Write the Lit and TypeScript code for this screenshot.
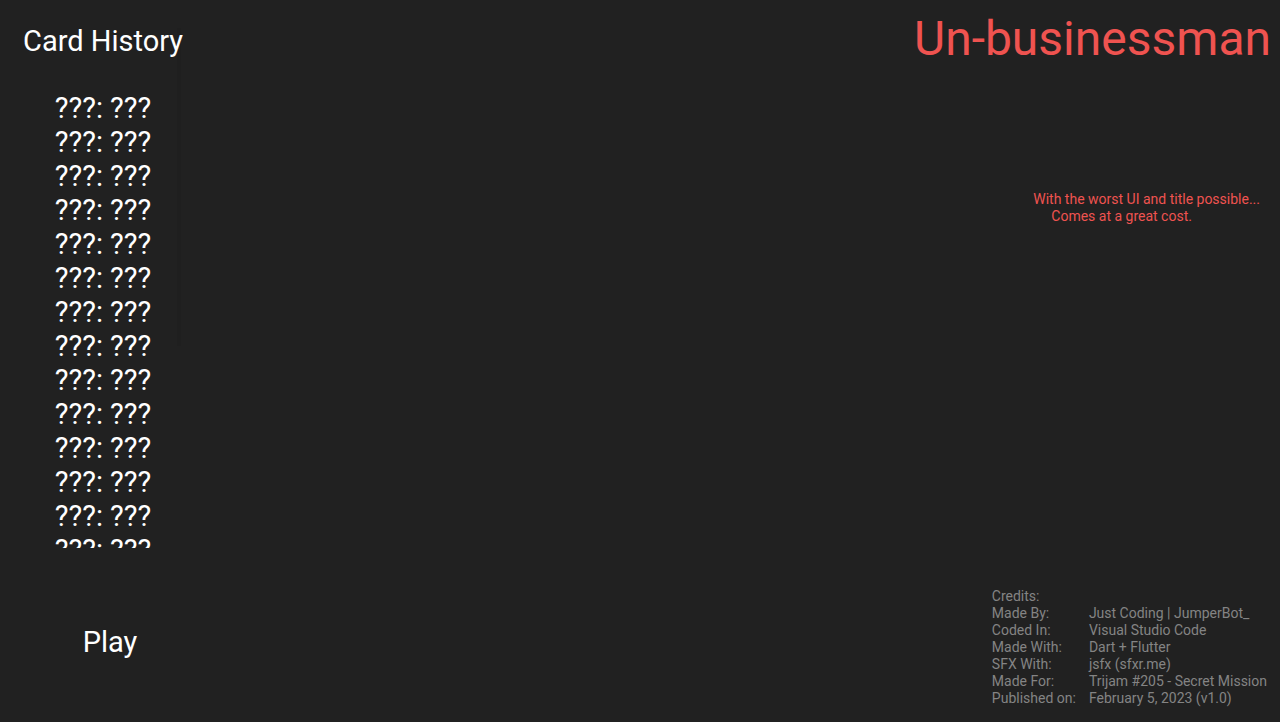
import { LitElement, html, css } from "lit";
import { customElement } from "lit/decorators.js";

const HISTORY_SLOTS = 14;

const CREDITS = [
  ["Made By:", "Just Coding | JumperBot_"],
  ["Coded In:", "Visual Studio Code"],
  ["Made With:", "Dart + Flutter"],
  ["SFX With:", "jsfx (sfxr.me)"],
  ["Made For:", "Trijam #205 - Secret Mission"],
  ["Published on:", "February 5, 2023 (v1.0)"],
];

@customElement("app-root")
export class AppRoot extends LitElement {
  static styles = css`
    :host {
      display: flex;
      justify-content: space-between;
      box-sizing: border-box;
      min-height: 100vh;
      background: #212121;
      color: #fff;
      font-family: Roboto, sans-serif;
    }
    .side {
      position: relative;
      display: flex;
      flex-direction: column;
      align-items: center;
      padding: 24px 23px;
    }
    /* Faint scrollbar thumb lying over the history column */
    .thumb {
      position: absolute;
      top: 28px;
      left: 177px;
      width: 4px;
      height: 318px;
      background: #1f1f1f;
      z-index: -1;
    }
    .side { z-index: 0; }
    h1, h2, p, ul, dl, dd { margin: 0; padding: 0; }
    .heading {
      font-size: 29px;
      line-height: 34px;
      font-weight: 400;
    }
    .history {
      list-style: none;
      margin-top: 33px;
      height: 457px;
      overflow-y: auto;
      scrollbar-width: none;
      font-size: 29px;
      line-height: 34px;
    }
    .play {
      margin: 77px 0 0 14px;
      padding: 0;
      border: 0;
      background: none;
      color: inherit;
      font: inherit;
      font-size: 29px;
      line-height: 34px;
      cursor: pointer;
    }
    .main {
      display: flex;
      flex-direction: column;
      align-items: flex-end;
      padding: 9px 9px 15px;
    }
    .title {
      font-size: 48px;
      line-height: 60px;
      font-weight: 400;
      color: #ef5350;
    }
    .tagline {
      margin: 122px 11px 0 0;
      font-size: 14px;
      line-height: 17px;
      color: #ef5350;
    }
    .second { padding-left: 18px; }
    .credits {
      margin: auto 4px 0 0;
      font-size: 14px;
      line-height: 17px;
      color: #848484;
    }
    .rows {
      display: grid;
      grid-template-columns: auto auto;
      column-gap: 13px;
    }
  `;

  render() {
    return html`
      <section class="side">
        <h2 class="heading">Card History</h2>
        <ul class="history">
          ${Array.from({ length: HISTORY_SLOTS }, () => html`<li>???: ???</li>`)}
        </ul>
        <button class="play" type="button">Play</button>
        <div class="thumb"></div>
      </section>
      <main class="main">
        <h1 class="title">Un-businessman</h1>
        <p class="tagline">
          With the worst UI and title possible...
          <br /><span class="second">Comes at a great cost.</span>
        </p>
        <section class="credits">
          <p>Credits:</p>
          <dl class="rows">
            ${CREDITS.map(([role, name]) => html`<dt>${role}</dt><dd>${name}</dd>`)}
          </dl>
        </section>
      </main>
    `;
  }
}
